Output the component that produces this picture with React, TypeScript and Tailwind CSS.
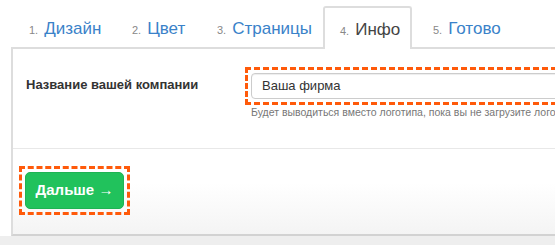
const tabs = [
  { n: '1.', label: 'Дизайн', w: 'w-[104px]', pl: 'pl-[16px]' },
  { n: '2.', label: 'Цвет', w: 'w-[85px]', pl: 'pl-[15px]' },
  { n: '3.', label: 'Страницы', w: 'w-[123px]', pl: 'pl-[15px]' },
  { n: '4.', label: 'Инфо', w: 'w-[89px]', pl: 'pl-[15px]', active: true },
  { n: '5.', label: 'Готово', w: 'w-[108px]', pl: 'pl-[19px]' },
]

export default function App() {
  return (
    <div className="w-[555px] h-[245px] overflow-hidden bg-[#eeeeee] font-['Liberation_Sans',Arial,sans-serif]">
      <div className="bg-white">
        {/* Steps */}
        <div className="flex items-end h-[47px] pl-[11px]">
          {tabs.map((t) => (
            <div
              key={t.n}
              className={
                t.active
                  ? `${t.w} ${t.pl} relative z-10 h-[43px] -mb-[2px] flex items-center bg-white border-2 border-b-0 border-[#dddddd] rounded-t-[3px]`
                  : `${t.w} ${t.pl} h-[43px] -mb-[2px] flex items-center border-2 border-transparent`
              }
            >
              <span className="flex items-baseline gap-[6px] pt-[2px]">
                <span className="text-[11px] text-[#888888]">{t.n}</span>
                <span className={`text-[17px] ${t.active ? 'text-[#444444]' : 'text-[#3a82c9]'}`}>
                  {t.label}
                </span>
              </span>
            </div>
          ))}
        </div>

        {/* Panel */}
        <div className="ml-[11px] border-t-2 border-l-2 border-b-2 border-t-[#dddddd] border-l-[#dddddd] border-b-[#d2d2d2]">
          <div className="flex h-[100px] pl-[13px] pt-[18px] border-b border-[#e8e8e8]">
            <div className="w-[219px] shrink-0 pt-[8px] text-[13px] font-bold text-[#333333]">
              Название вашей компании
            </div>
            <div className="flex-1 min-w-0">
              <div className="w-[420px] p-[3px] border-[3px] border-dashed border-[#ff5a0a]">
                <div className="h-[26px] flex items-center pl-[10px] text-[13px] text-[#333333] bg-white border border-[#cccccc] rounded-[4px] shadow-[inset_0_1px_1px_rgba(0,0,0,0.075)]">
                  Ваша фирма
                </div>
              </div>
              <p className="ml-[6px] mt-[1px] text-[10.5px] leading-[12px] text-[#777777] whitespace-nowrap">
                Будет выводиться вместо логотипа, пока вы не загрузите логотип
              </p>
            </div>
          </div>

          <div className="h-[85px] pl-[6px] pt-[17px] bg-gradient-to-b from-white from-40% to-[#f4f4f4]">
            <div className="inline-block p-[3px] border-[3px] border-dashed border-[#ff5a0a]">
              <button className="block h-[37px] w-[99px] rounded-[5px] bg-[#21c25c] border border-[#1eb353] text-white text-[15px] font-bold">
                Дальше →
              </button>
            </div>
          </div>
        </div>
      </div>
    </div>
  )
}
